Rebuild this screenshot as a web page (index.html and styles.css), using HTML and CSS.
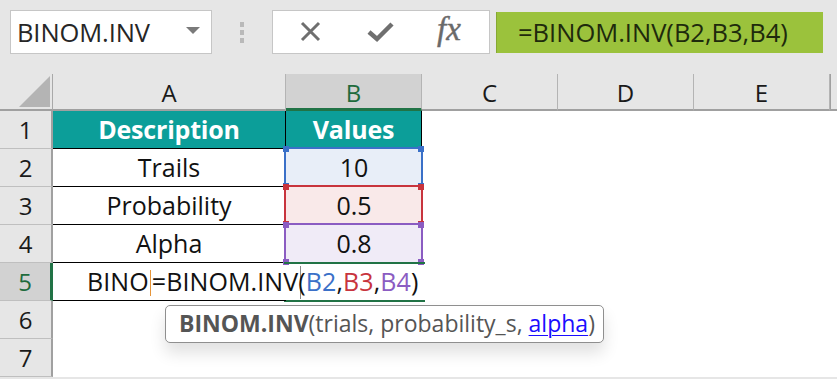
FILE: index.html
```html
<!DOCTYPE html>
<html>
<head>
<meta charset="utf-8">
<link rel="stylesheet" href="styles.css">
</head>
<body>
<div class="app">
  <div class="toolbar">
    <div class="namebox">
      <span class="name">BINOM.INV</span>
      <svg class="dd" width="14" height="7" viewBox="0 0 14 7"><path d="M0 0H14L7 7Z" fill="#7a7a7a"/></svg>
    </div>
    <div class="grip"><i></i><i></i><i></i></div>
    <div class="btns">
      <svg class="ico" width="26" height="26" viewBox="0 0 26 26"><path d="M4 4L21 21M21 4L4 21" stroke="#6f6f6f" stroke-width="3" fill="none"/></svg>
      <svg class="ico" width="28" height="26" viewBox="0 0 28 26"><path d="M2 13L10 20L25 5" stroke="#6f6f6f" stroke-width="4.5" fill="none" stroke-linejoin="miter"/></svg>
      <span class="fx">fx</span>
    </div>
    <div class="formula">=BINOM.INV(B2,B3,B4)</div>
  </div>
  <div class="sheet">
    <div class="corner"><svg width="31" height="31" viewBox="0 0 31 31"><path d="M31 0V31H0Z" fill="#b4b4b4"/></svg></div>
    <div class="ch">A</div>
    <div class="ch sel">B</div>
    <div class="ch">C</div>
    <div class="ch">D</div>
    <div class="ch">E</div>
    <div class="ch end"></div>

    <div class="rh">1</div>
    <div class="c a hd">Description</div>
    <div class="c b hd">Values</div>
    <div class="c"></div><div class="c"></div><div class="c"></div><div class="c"></div>

    <div class="rh">2</div>
    <div class="c a bd">Trails</div>
    <div class="c b rng blue">10</div>
    <div class="c"></div><div class="c"></div><div class="c"></div><div class="c"></div>

    <div class="rh">3</div>
    <div class="c a bd">Probability</div>
    <div class="c b rng red">0.5</div>
    <div class="c"></div><div class="c"></div><div class="c"></div><div class="c"></div>

    <div class="rh">4</div>
    <div class="c a bd">Alpha</div>
    <div class="c b rng purple">0.8</div>
    <div class="c"></div><div class="c"></div><div class="c"></div><div class="c"></div>

    <div class="rh sel">5</div>
    <div class="c a edit"><span class="etext">BINO<span class="caret"></span>=BINOM.INV(<span class="r1">B2</span>,<span class="r2">B3</span>,<span class="r3">B4</span>)</span></div>
    <div class="c b active"><span class="ibeam"></span></div>
    <div class="c"></div><div class="c"></div><div class="c"></div><div class="c"></div>

    <div class="rh">6</div>
    <div class="c"></div><div class="c"></div><div class="c"></div><div class="c"></div><div class="c"></div><div class="c"></div>

    <div class="rh">7</div>
    <div class="c"></div><div class="c"></div><div class="c"></div><div class="c"></div><div class="c"></div><div class="c"></div>

    <div class="tip"><b>BINOM.INV</b>(trials, probability_s, <u>alpha</u>)</div>
  </div>
</div>
</body>
</html>
```

FILE: styles.css
```css
* { box-sizing: border-box; }
html, body { margin: 0; padding: 0; }
body {
  width: 837px;
  height: 379px;
  overflow: hidden;
  background: #e6e6e6;
  font-family: "Open Sans", "Noto Sans", sans-serif;
}
.app { display: flex; flex-direction: column; }

.toolbar {
  height: 74px;
  display: flex;
  align-items: flex-start;
  padding: 10px 0 0 10px;
}
.namebox {
  width: 202px;
  height: 44px;
  background: #fff;
  border: 1px solid #c6c6c6;
  display: flex;
  align-items: center;
  justify-content: space-between;
  padding: 0 11px 0 6px;
}
.name { font-size: 25.5px; color: #262626; letter-spacing: -0.1px; }
.dd { margin-top: -3px; }
.grip {
  width: 60px;
  height: 44px;
  display: flex;
  flex-direction: column;
  align-items: center;
  justify-content: center;
  gap: 3px;
}
.grip i { display: block; width: 4px; height: 5px; background: #b9b9b9; }
.btns {
  width: 218px;
  height: 44px;
  background: #fff;
  border: 1px solid #c6c6c6;
  display: flex;
  align-items: center;
  padding: 0 0 0 25px;
  gap: 45px;
}
.ico { display: block; }
.btns .ico:nth-child(2) { margin-left: -2px; }
.fx {
  font-family: "Liberation Serif", serif;
  font-style: italic;
  font-size: 33px;
  color: #6a6a6a;
  margin-left: -3px;
  margin-top: -5px;
  -webkit-text-stroke: 0.4px #6a6a6a;
}
.formula {
  margin-left: 6px;
  margin-top: 2px;
  width: 327px;
  height: 41px;
  background: #9bc23c;
  border-left: 1px solid #86a832;
  color: #1e2a0c;
  font-size: 25.5px;
  line-height: 40px;
  padding-left: 21px;
  white-space: nowrap;
}

.sheet {
  position: relative;
  display: grid;
  grid-template-columns: 53px 233px 136px 136px 136px 136px 7px;
  grid-template-rows: 37px repeat(7, 38px);
  background: #fff;
}
.corner {
  background: #e6e6e6;
  border-right: 1px solid #a9a9a9;
  border-bottom: 2px solid #a0a0a0;
  display: flex;
  align-items: flex-end;
  justify-content: flex-end;
  padding: 0 2px 2px 0;
}
.corner svg { display: block; }
.ch {
  background: #e6e6e6;
  border-right: 1px solid #b4b4b4;
  border-bottom: 2px solid #a0a0a0;
  font-size: 24px;
  color: #1a1a1a;
  text-align: center;
  line-height: 37px;
  position: relative;
}
.ch.sel { background: #d2d2d2; color: #1e6b3d; border-bottom: 3px solid #217346; }
.ch.end { border-right: 0; background: #e6e6e6; }
.ch.end::before {
  content: "";
  position: absolute;
  left: 0; top: 0; bottom: -2px;
  width: 1px;
  background: #a0a0a0;
}

.rh {
  background: #e6e6e6;
  border-right: 2px solid #a0a0a0;
  border-bottom: 1px solid #bfbfbf;
  font-size: 24px;
  color: #1a1a1a;
  text-align: center;
  line-height: 38px;
}
.rh.sel { background: #d2d2d2; color: #1e6b3d; border-right: 3px solid #217346; }

.c {
  font-size: 25px;
  color: #111;
  text-align: center;
  line-height: 37px;
  position: relative;
}
.c.a { border-bottom: 1px solid #000; border-right: 1px solid #000; }
.c.b { border-right: 1px solid #000; }
.c.hd {
  background: #0c9e99;
  color: #fff;
  font-weight: bold;
  font-size: 25px;
  letter-spacing: -0.2px;
  border-bottom: 1px solid #000;
}
.rng { border-right: 0 !important; }
.rng::before {
  content: "";
  position: absolute;
  left: -2px; top: -2px; right: -1px; bottom: -1px;
  border: 2px solid currentColor;
  pointer-events: none;
}
.rng::after {
  content: "";
  position: absolute;
  left: -3px; top: -3px; right: -2px; bottom: -2px;
  background:
    linear-gradient(var(--hc), var(--hc)) left top / 6px 6px no-repeat,
    linear-gradient(var(--hc), var(--hc)) right top / 6px 6px no-repeat,
    linear-gradient(var(--hc), var(--hc)) left bottom / 6px 6px no-repeat,
    linear-gradient(var(--hc), var(--hc)) right bottom / 6px 6px no-repeat;
}
.rng.blue { background: #e8eef8; color: #111; --hc: #3a70c8; }
.rng.red { background: #f9e9e9; color: #111; --hc: #c8343d; }
.rng.purple { background: #f0ebf7; color: #111; --hc: #8b5cc2; }
.rng.blue::before { border-color: #3a70c8; }
.rng.red::before { border-color: #c8343d; }
.rng.purple::before { border-color: #8b5cc2; }
.rng.red, .rng.purple { z-index: 1; }
.rng.purple { z-index: 2; }

.c.edit {
  border-right: 0;
  text-align: left;
  overflow: visible;
  white-space: nowrap;
  z-index: 3;
}
.etext { display: inline-block; padding-left: 34px; color: #111; letter-spacing: 0.1px; }
.caret {
  display: inline-block;
  width: 1px;
  height: 26px;
  background: #e6953a;
  vertical-align: -5px;
  margin: 0 1px;
}
.r1 { color: #3a70c8; }
.r2 { color: #c8343d; }
.r3 { color: #8b5cc2; }
.c.active {
  border-right: 0;
  border-top: 2px solid #217346;
  border-bottom: 2px solid #217346;
  margin: -1px -3px -1px -2px;
  z-index: 2;
}
.ibeam {
  position: absolute;
  left: 16px;
  top: 2px;
  bottom: 1px;
  width: 1px;
  background: #8a8a8a;
}

.tip {
  position: absolute;
  left: 165px;
  top: 231px;
  height: 38px;
  padding: 0 8px 0 13px;
  background: #fff;
  border: 1.5px solid #8f8f8f;
  border-radius: 5px;
  box-shadow: 0 10px 16px rgba(0,0,0,0.12);
  font-size: 23px;
  line-height: 35px;
  color: #555;
  white-space: nowrap;
  z-index: 5;
}
.tip b { color: #555; }
.tip u { color: #1a0dff; text-decoration-thickness: 1px; text-underline-offset: 3px; }
```
